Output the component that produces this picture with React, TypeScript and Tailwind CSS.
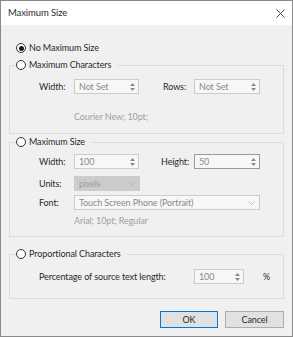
import React from "react";

const font = { fontFamily: 'Lato, "Noto Sans", sans-serif' };

function Radio({ checked }: { checked?: boolean }) {
  return (
    <span className="w-[10px] h-[10px] rounded-full border border-[#333333] bg-white flex items-center justify-center shrink-0">
      {checked && <span className="w-[5px] h-[5px] rounded-full bg-[#1a1a1a]" />}
    </span>
  );
}

function Spin() {
  return (
    <span className="w-[11px] h-full flex flex-col items-center justify-center gap-[2px] shrink-0">
      <svg width="5" height="3" viewBox="0 0 5 3"><path d="M0 3 L2.5 0 L5 3 Z" fill="#8a8a8a" /></svg>
      <svg width="5" height="3" viewBox="0 0 5 3"><path d="M0 0 L2.5 3 L5 0 Z" fill="#8a8a8a" /></svg>
    </span>
  );
}

function SpinInput({ value, w, dark }: { value: string; w: string; dark?: boolean }) {
  return (
    <div className={`${w} h-[15px] border ${dark ? "border-[#9a9a9a]" : "border-[#cccccc]"} bg-[#f7f7f7] flex items-center`}>
      <span className="flex-1 pl-[4px] text-[#8a8a8a] leading-none">{value}</span>
      <Spin />
    </div>
  );
}

function Chevron({ color }: { color: string }) {
  return (
    <svg width="7" height="4" viewBox="0 0 7 4" className="shrink-0 mr-[4px]">
      <path d="M0.5 0.5 L3.5 3.5 L6.5 0.5" stroke={color} strokeWidth="0.8" fill="none" />
    </svg>
  );
}

export default function App() {
  return (
    <div style={font} className="w-[293px] h-[337px] border border-[#8a8a8a] flex flex-col text-[9px] tracking-[-0.1px] text-[#2a2a2a] overflow-hidden">
      <div className="h-[24px] bg-white flex items-center justify-between pl-[7px] pr-[7px] shrink-0">
        <span className="text-[9.5px] text-[#2a2a2a]">Maximum Size</span>
        <svg width="9" height="9" viewBox="0 0 9 9"><path d="M0.5 0.5 L8.5 8.5 M8.5 0.5 L0.5 8.5" stroke="#333" strokeWidth="0.9" /></svg>
      </div>
      <div className="flex-1 bg-[#f0f0f0] px-[8px] pt-[17px] flex flex-col">
        <div className="h-[12px] flex items-center gap-[3px] ml-[7px]">
          <Radio checked />
          <span>No Maximum Size</span>
        </div>

        <fieldset className="mt-[5px] border border-[#dcdcdc] px-[6px] pt-[8px] pb-[10px]">
          <legend className="h-[12px] flex items-center gap-[3px] pr-[6px]">
            <Radio />
            <span>Maximum Characters</span>
          </legend>
          <div className="ml-[23px] flex items-center h-[15px]">
            <span className="w-[35px]">Width:</span>
            <SpinInput value="Not Set" w="w-[65px]" />
            <span className="ml-[24px] w-[31px]">Rows:</span>
            <SpinInput value="Not Set" w="w-[66px]" />
          </div>
          <div className="ml-[58px] mt-[17px] h-[12px] flex items-center text-[#a0a0a0]">Courier New; 10pt;</div>
        </fieldset>

        <fieldset className="mt-[2px] border border-[#dcdcdc] px-[6px] pt-[6px] pb-[9px]">
          <legend className="h-[12px] flex items-center gap-[3px] pr-[6px]">
            <Radio />
            <span>Maximum Size</span>
          </legend>
          <div className="ml-[23px] flex items-center h-[15px]">
            <span className="w-[35px]">Width:</span>
            <SpinInput value="100" w="w-[65px]" />
            <span className="ml-[22px] w-[33px]">Height:</span>
            <SpinInput value="50" w="w-[66px]" dark />
          </div>
          <div className="ml-[23px] mt-[7px] flex items-center h-[15px]">
            <span className="w-[35px]">Units:</span>
            <div className="w-[66px] h-[15px] bg-[#cccccc] border border-[#cccccc] flex items-center">
              <span className="flex-1 pl-[4px] text-[#9a9a9a]">pixels</span>
              <Chevron color="#b0b0b0" />
            </div>
          </div>
          <div className="ml-[23px] mt-[4px] flex items-center h-[15px]">
            <span className="w-[35px]">Font:</span>
            <div className="w-[186px] h-[15px] bg-[#f7f7f7] border border-[#cccccc] flex items-center">
              <span className="flex-1 pl-[4px] text-[#8a8a8a]">Touch Screen Phone (Portrait)</span>
              <Chevron color="#b0b0b0" />
            </div>
          </div>
          <div className="ml-[58px] mt-[5px] h-[12px] flex items-center text-[#a0a0a0]">Arial; 10pt; Regular</div>
        </fieldset>

        <fieldset className="mt-[11px] border border-[#dcdcdc] px-[6px] pt-[9px] pb-[14px]">
          <legend className="h-[12px] flex items-center gap-[3px] pr-[6px]">
            <Radio />
            <span>Proportional Characters</span>
          </legend>
          <div className="ml-[23px] flex items-center h-[15px]">
            <span className="w-[155px]">Percentage of source text length:</span>
            <SpinInput value="100" w="w-[50px]" />
            <span className="ml-[19px]">%</span>
          </div>
        </fieldset>

        <div className="mt-[12px] flex justify-end gap-[7px]">
          <button className="w-[58px] h-[17px] bg-[#e1e1e1] border border-[#0078d7] text-[9px] leading-none">OK</button>
          <button className="w-[59px] h-[17px] bg-[#e1e1e1] border border-[#adadad] text-[9px] leading-none">Cancel</button>
        </div>
      </div>
    </div>
  );
}
